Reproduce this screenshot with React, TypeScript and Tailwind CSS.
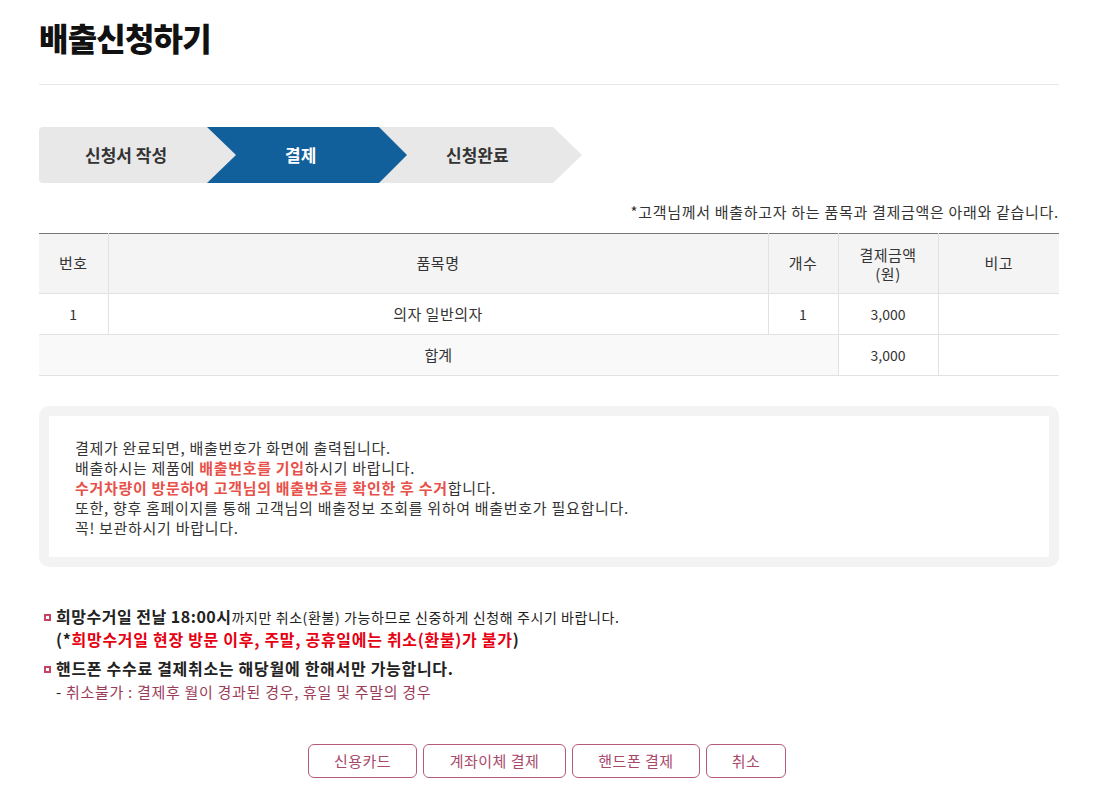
import React from "react";

const font = { fontFamily: '"Noto Sans CJK KR", "Noto Sans", sans-serif' };

const Bullet = () => (
  <span className="mr-[5px] inline-block h-[7px] w-[7px] border-[2px] border-[#c8435f] align-middle mb-[3px]" />
);

export default function App() {
  return (
    <div className="min-h-[799px] bg-white text-[#333]" style={font}>
      <div className="ml-[39px] w-[1020px] pt-[14px]">
        {/* Title */}
        <h1 className="text-[32px] font-black leading-[46px] tracking-[-0.8px] text-[#111]">배출신청하기</h1>
        <div className="mt-[24px] h-px bg-[#e6e6e6]" />

        {/* Steps */}
        <div className="mt-[42px] flex h-[56px]">
          <div className="relative z-30 flex w-[197px] items-center rounded-l-[4px] bg-[#e8e8e8] pl-[46px] text-[17px] font-bold text-[#333] [clip-path:polygon(0_0,168px_0,197px_50%,168px_100%,0_100%)]">
            신청서 작성
          </div>
          <div className="relative z-20 ml-[-30px] flex w-[201px] items-center bg-[#12609b] pl-[79px] text-[17px] font-bold text-white [clip-path:polygon(0_0,173px_0,201px_50%,173px_100%,0_100%)]">
            결제
          </div>
          <div className="relative z-10 ml-[-27px] flex w-[202px] items-center bg-[#e8e8e8] pl-[66px] text-[17px] font-bold text-[#333] [clip-path:polygon(0_0,173px_0,202px_50%,173px_100%,0_100%)]">
            신청완료
          </div>
        </div>

        <p className="mt-[19px] text-right text-[15px] leading-[20px] tracking-[0.7px] text-[#333]">
          *고객님께서 배출하고자 하는 품목과 결제금액은 아래와 같습니다.
        </p>

        {/* Table */}
        <table className="mt-[11px] w-full border-collapse border-t border-t-[#777] text-[14px] text-[#333]">
          <colgroup>
            <col className="w-[69px]" />
            <col className="w-[660px]" />
            <col className="w-[70px]" />
            <col className="w-[100px]" />
            <col className="w-[121px]" />
          </colgroup>
          <thead>
            <tr className="h-[60px] bg-[#f4f4f4] text-[15px] tracking-[0.5px]">
              <th className="border-b border-r border-[#e2e2e2] font-normal">번호</th>
              <th className="border-b border-r border-[#e2e2e2] font-normal">품목명</th>
              <th className="border-b border-r border-[#e2e2e2] font-normal">개수</th>
              <th className="border-b border-r border-[#e2e2e2] font-normal leading-[19px]">
                결제금액
                <br />
                (원)
              </th>
              <th className="border-b border-[#e2e2e2] font-normal">비고</th>
            </tr>
          </thead>
          <tbody>
            <tr className="h-[41px] text-center">
              <td className="border-b border-r border-[#e2e2e2]">1</td>
              <td className="border-b border-r border-[#e2e2e2] text-[15px] tracking-[0.5px]">의자 일반의자</td>
              <td className="border-b border-r border-[#e2e2e2]">1</td>
              <td className="border-b border-r border-[#e2e2e2]">3,000</td>
              <td className="border-b border-[#e2e2e2]"></td>
            </tr>
            <tr className="h-[41px] text-center">
              <td colSpan={3} className="border-b border-r border-[#e2e2e2] bg-[#f9f9f9] text-[15px]">
                합계
              </td>
              <td className="border-b border-r border-[#e2e2e2]">3,000</td>
              <td className="border-b border-[#e2e2e2]"></td>
            </tr>
          </tbody>
        </table>

        {/* Notice box */}
        <div className="mt-[30px] rounded-[10px] border-[10px] border-[#f3f3f3] px-[26px] pb-[19px] pt-[22px] text-[15px] leading-[20px] tracking-[0.7px] text-[#333]">
          <p>결제가 완료되면, 배출번호가 화면에 출력됩니다.</p>
          <p>
            배출하시는 제품에 <span className="font-bold text-[#e8504a]">배출번호를 기입</span>하시기 바랍니다.
          </p>
          <p>
            <span className="font-bold text-[#e8504a]">수거차량이 방문하여 고객님의 배출번호를 확인한 후 수거</span>합니다.
          </p>
          <p>또한, 향후 홈페이지를 통해 고객님의 배출정보 조회를 위하여 배출번호가 필요합니다.</p>
          <p>꼭! 보관하시기 바랍니다.</p>
        </div>

        {/* Cancel rules */}
        <div className="mt-[39px] pl-[5px] tracking-[0.7px] text-[#222]">
          <p className="text-[14px] leading-[21px] tracking-[0.6px]">
            <Bullet />
            <span className="text-[16px] font-bold tracking-[0.5px]">희망수거일 전날 18:00시</span>까지만 취소(환불) 가능하므로 신중하게 신청해 주시기 바랍니다.
          </p>
          <p className="pl-[12px] text-[16px] font-bold leading-[22px]">
            (*<span className="text-[#e60012]">희망수거일 현장 방문 이후, 주말, 공휴일에는 취소(환불)가 불가</span>)
          </p>
          <p className="mt-[7px] text-[16px] font-bold leading-[22px]">
            <Bullet />
            핸드폰 수수료 결제취소는 해당월에 한해서만 가능합니다.
          </p>
          <p className="mt-[3px] pl-[12px] text-[15px] leading-[20px]">
            - <span className="text-[#9c3b58]">취소불가 : 결제후 월이 경과된 경우, 휴일 및 주말의 경우</span>
          </p>
        </div>

        {/* Buttons */}
        <div className="mt-[42px] flex justify-center gap-[6px] pr-[4px]">
          <button className="h-[34px] w-[109px] rounded-[6px] border border-[#b65a78] text-[15px] tracking-[0.5px] text-[#a8486a]">신용카드</button>
          <button className="h-[34px] w-[143px] rounded-[6px] border border-[#b65a78] text-[15px] tracking-[0.5px] text-[#a8486a]">계좌이체 결제</button>
          <button className="h-[34px] w-[128px] rounded-[6px] border border-[#b65a78] text-[15px] tracking-[0.5px] text-[#a8486a]">핸드폰 결제</button>
          <button className="h-[34px] w-[80px] rounded-[6px] border border-[#b65a78] text-[15px] tracking-[0.5px] text-[#a8486a]">취소</button>
        </div>
      </div>
    </div>
  );
}
